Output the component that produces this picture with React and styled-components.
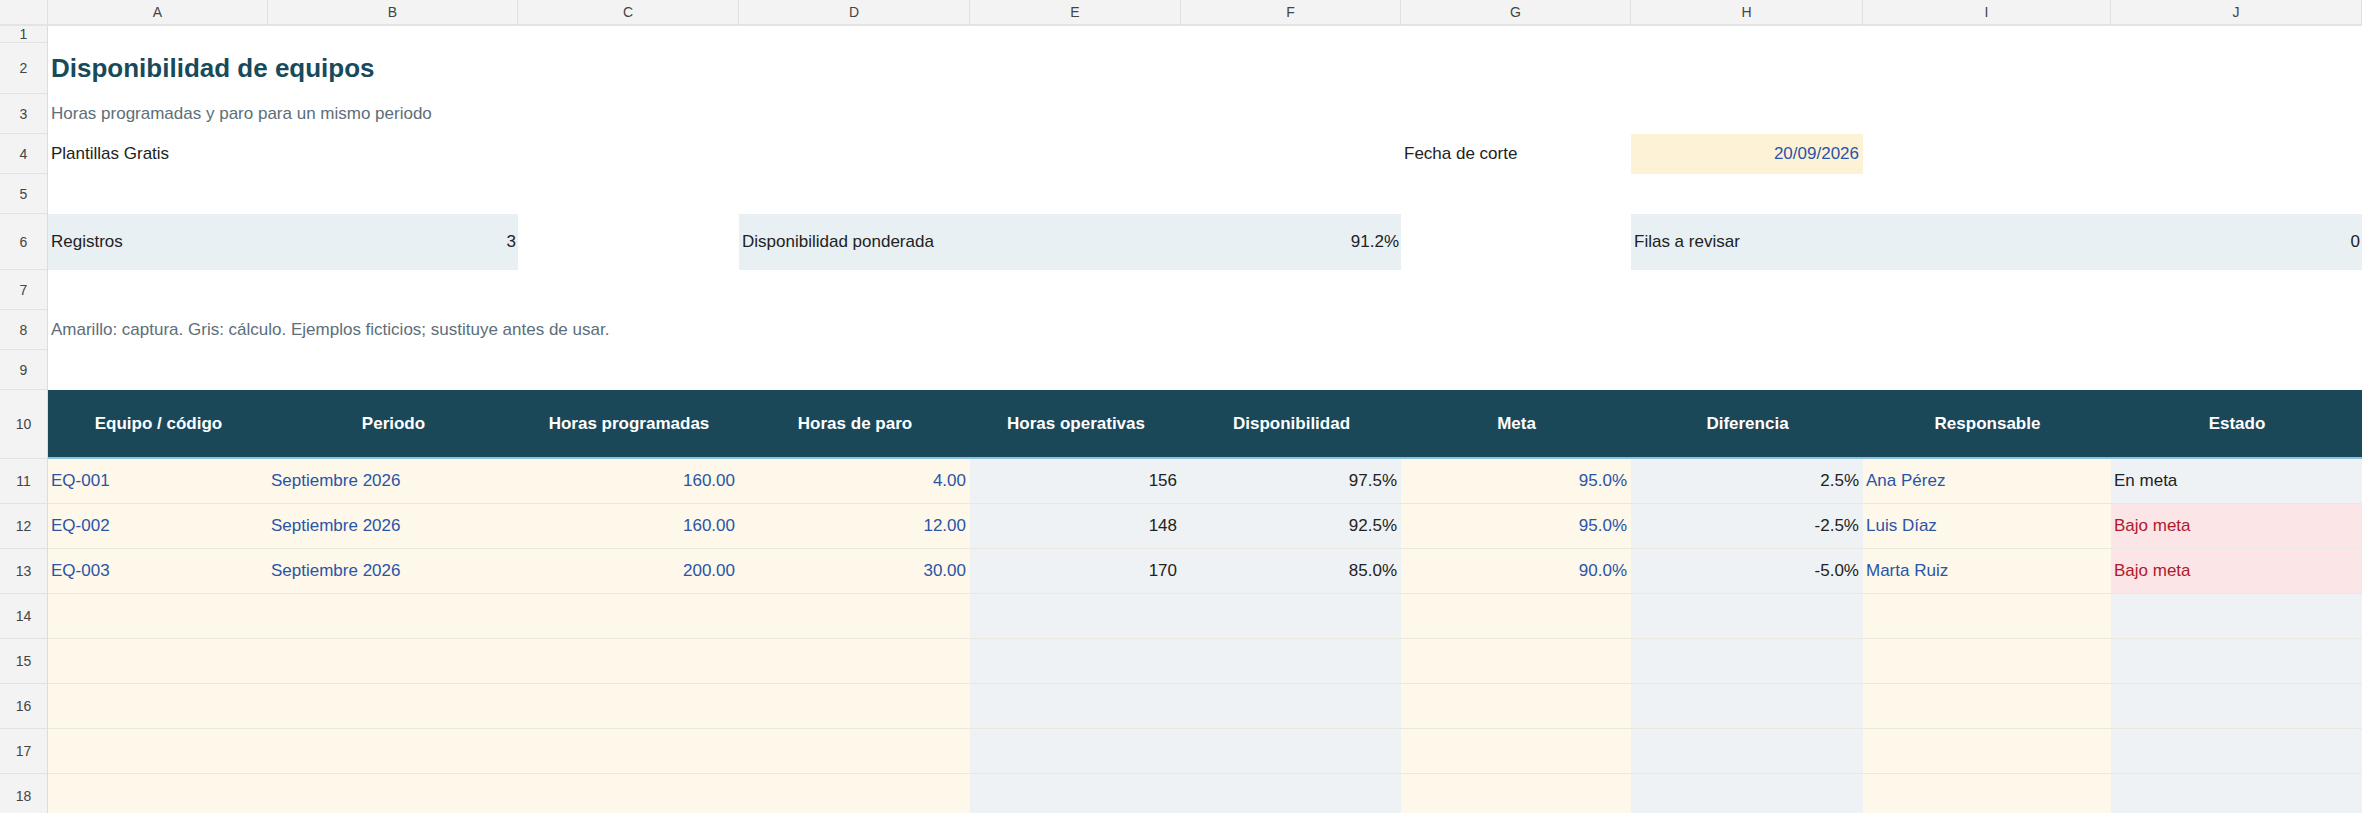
import React from "react";
import styled, { createGlobalStyle } from "styled-components";

const Global = createGlobalStyle`
  body { margin: 0; background: #fff; font-family: "Liberation Sans", Arial, sans-serif; }
`;

const COLS = "48px 220px 250px 221px 231px 211px 220px 230px 232px 248px 251px";
const LETTERS = ["A", "B", "C", "D", "E", "F", "G", "H", "I", "J"];

const Sheet = styled.div`
  display: grid;
  grid-template-columns: ${COLS};
  grid-auto-rows: ${(p) => p.$rows};
  width: 2362px;
  overflow: hidden;
`;

const ColHead = styled.div`
  height: 24px;
  background: #f3f3f3;
  border-right: 1px solid #e0e0e0;
  border-bottom: 2px solid #e4e4e4;
  display: flex;
  align-items: center;
  justify-content: center;
  font-size: 14px;
  color: #444;
`;

const RowNum = styled.div`
  height: ${(p) => p.$h}px;
  background: #f3f3f3;
  border-bottom: 1px solid #e2e2e2;
  border-right: 1px solid #dcdcdc;
  box-sizing: border-box;
  display: flex;
  align-items: center;
  justify-content: center;
  font-size: 14px;
  color: #444;
`;

const Cell = styled.div`
  grid-column: span ${(p) => p.$span || 1};
  height: ${(p) => p.$h}px;
  box-sizing: border-box;
  background: ${(p) => p.$bg || "#fff"};
  color: ${(p) => p.$color || "#222"};
  font-size: ${(p) => p.$size || 17}px;
  font-weight: ${(p) => (p.$bold ? 700 : 400)};
  display: flex;
  align-items: center;
  justify-content: ${(p) => (p.$align === "right" ? "flex-end" : p.$align === "center" ? "center" : "flex-start")};
  padding: 0 ${(p) => (p.$align === "right" ? 4 : 2)}px 0 3px;
  border-bottom: ${(p) => p.$line || "none"};
  white-space: nowrap;
`;

const YEL = "#fdf8e9";
const GRY = "#eef2f4";
const PINK = "#fbe5e7";
const BLUE = "#2a54a8";
const SUM = "#e8f0f3";

const heights = [17, 51, 40, 40, 40, 56, 40, 40, 40, 69, 45, 45, 45, 45, 45, 45, 45, 45];

const data = [
  ["EQ-001", "Septiembre 2026", "160.00", "4.00", "156", "97.5%", "95.0%", "2.5%", "Ana Pérez", "En meta"],
  ["EQ-002", "Septiembre 2026", "160.00", "12.00", "148", "92.5%", "95.0%", "-2.5%", "Luis Díaz", "Bajo meta"],
  ["EQ-003", "Septiembre 2026", "200.00", "30.00", "170", "85.0%", "90.0%", "-5.0%", "Marta Ruiz", "Bajo meta"],
];
const fills = [YEL, YEL, YEL, YEL, GRY, GRY, YEL, GRY, YEL, GRY];
const aligns = ["left", "left", "right", "right", "right", "right", "right", "right", "left", "left"];
const inputs = [true, true, true, true, false, false, true, false, true, false];
const headers = ["Equipo / código", "Periodo", "Horas programadas", "Horas de paro", "Horas operativas", "Disponibilidad", "Meta", "Diferencia", "Responsable", "Estado"];

function rowCells(r, h) {
  const blank = (n, k) => Array.from({ length: n }, (_, i) => <Cell key={k + i} $h={h} />);
  switch (r) {
    case 2:
      return [<Cell key="t" $h={h} $span={10} $size={26} $bold $color="#184a5c">Disponibilidad de equipos</Cell>];
    case 3:
      return [<Cell key="s" $h={h} $span={10} $color="#5d6e78">Horas programadas y paro para un mismo periodo</Cell>];
    case 4:
      return [
        <Cell key="p" $h={h} $span={6}>Plantillas Gratis</Cell>,
        <Cell key="f" $h={h}>Fecha de corte</Cell>,
        <Cell key="d" $h={h} $bg="#fdf2d6" $color={BLUE} $align="right">20/09/2026</Cell>,
        ...blank(2, "b"),
      ];
    case 6:
      return [
        <Cell key="r" $h={h} $span={2} $bg={SUM}>Registros</Cell>,
        <Cell key="r2" $h={h} $bg={SUM} $align="right" style={{ marginLeft: -4 }} hidden />,
        <Cell key="c" $h={h} />,
        <Cell key="d" $h={h} $span={3} $bg={SUM}>Disponibilidad ponderada</Cell>,
        <Cell key="g" $h={h} />,
        <Cell key="h" $h={h} $span={3} $bg={SUM}>Filas a revisar</Cell>,
      ];
    case 8:
      return [<Cell key="n" $h={h} $span={10} $color="#5d6e78">Amarillo: captura. Gris: cálculo. Ejemplos ficticios; sustituye antes de usar.</Cell>];
    case 10:
      return headers.map((t) => (
        <Cell key={t} $h={h} $bg="#1b4859" $color="#fff" $bold $align="center" $line="2px solid #8cc4e0">{t}</Cell>
      ));
    default:
      if (r >= 11) {
        const row = data[r - 11];
        return fills.map((f, i) => {
          const v = row ? row[i] : "";
          const bad = i === 9 && v === "Bajo meta";
          return (
            <Cell key={i} $h={h} $bg={bad ? PINK : f} $align={aligns[i]} $line="1px solid #ebe8e0"
              $color={bad ? "#b0182c" : inputs[i] ? BLUE : "#222"}>{v}</Cell>
          );
        });
      }
      return blank(10, "e");
  }
}

const SummaryPair = ({ h, span, label, value }) => (
  <Cell $h={h} $span={span} $bg={SUM} style={{ justifyContent: "space-between" }}>
    <span>{label}</span>
    <span>{value}</span>
  </Cell>
);

export default function App() {
  return (
    <>
      <Global />
      <Sheet $rows="auto">
        <ColHead />
        {LETTERS.map((l) => <ColHead key={l}>{l}</ColHead>)}
        {heights.map((h, idx) => {
          const r = idx + 1;
          let cells;
          if (r === 6) {
            cells = [
              <SummaryPair key="a" h={h} span={2} label="Registros" value="3" />,
              <Cell key="c" $h={h} />,
              <SummaryPair key="d" h={h} span={3} label="Disponibilidad ponderada" value="91.2%" />,
              <Cell key="g" $h={h} />,
              <SummaryPair key="h" h={h} span={3} label="Filas a revisar" value="0" />,
            ];
          } else {
            cells = rowCells(r, h);
          }
          return (
            <React.Fragment key={r}>
              <RowNum $h={h}>{r}</RowNum>
              {cells}
            </React.Fragment>
          );
        })}
      </Sheet>
    </>
  );
}
